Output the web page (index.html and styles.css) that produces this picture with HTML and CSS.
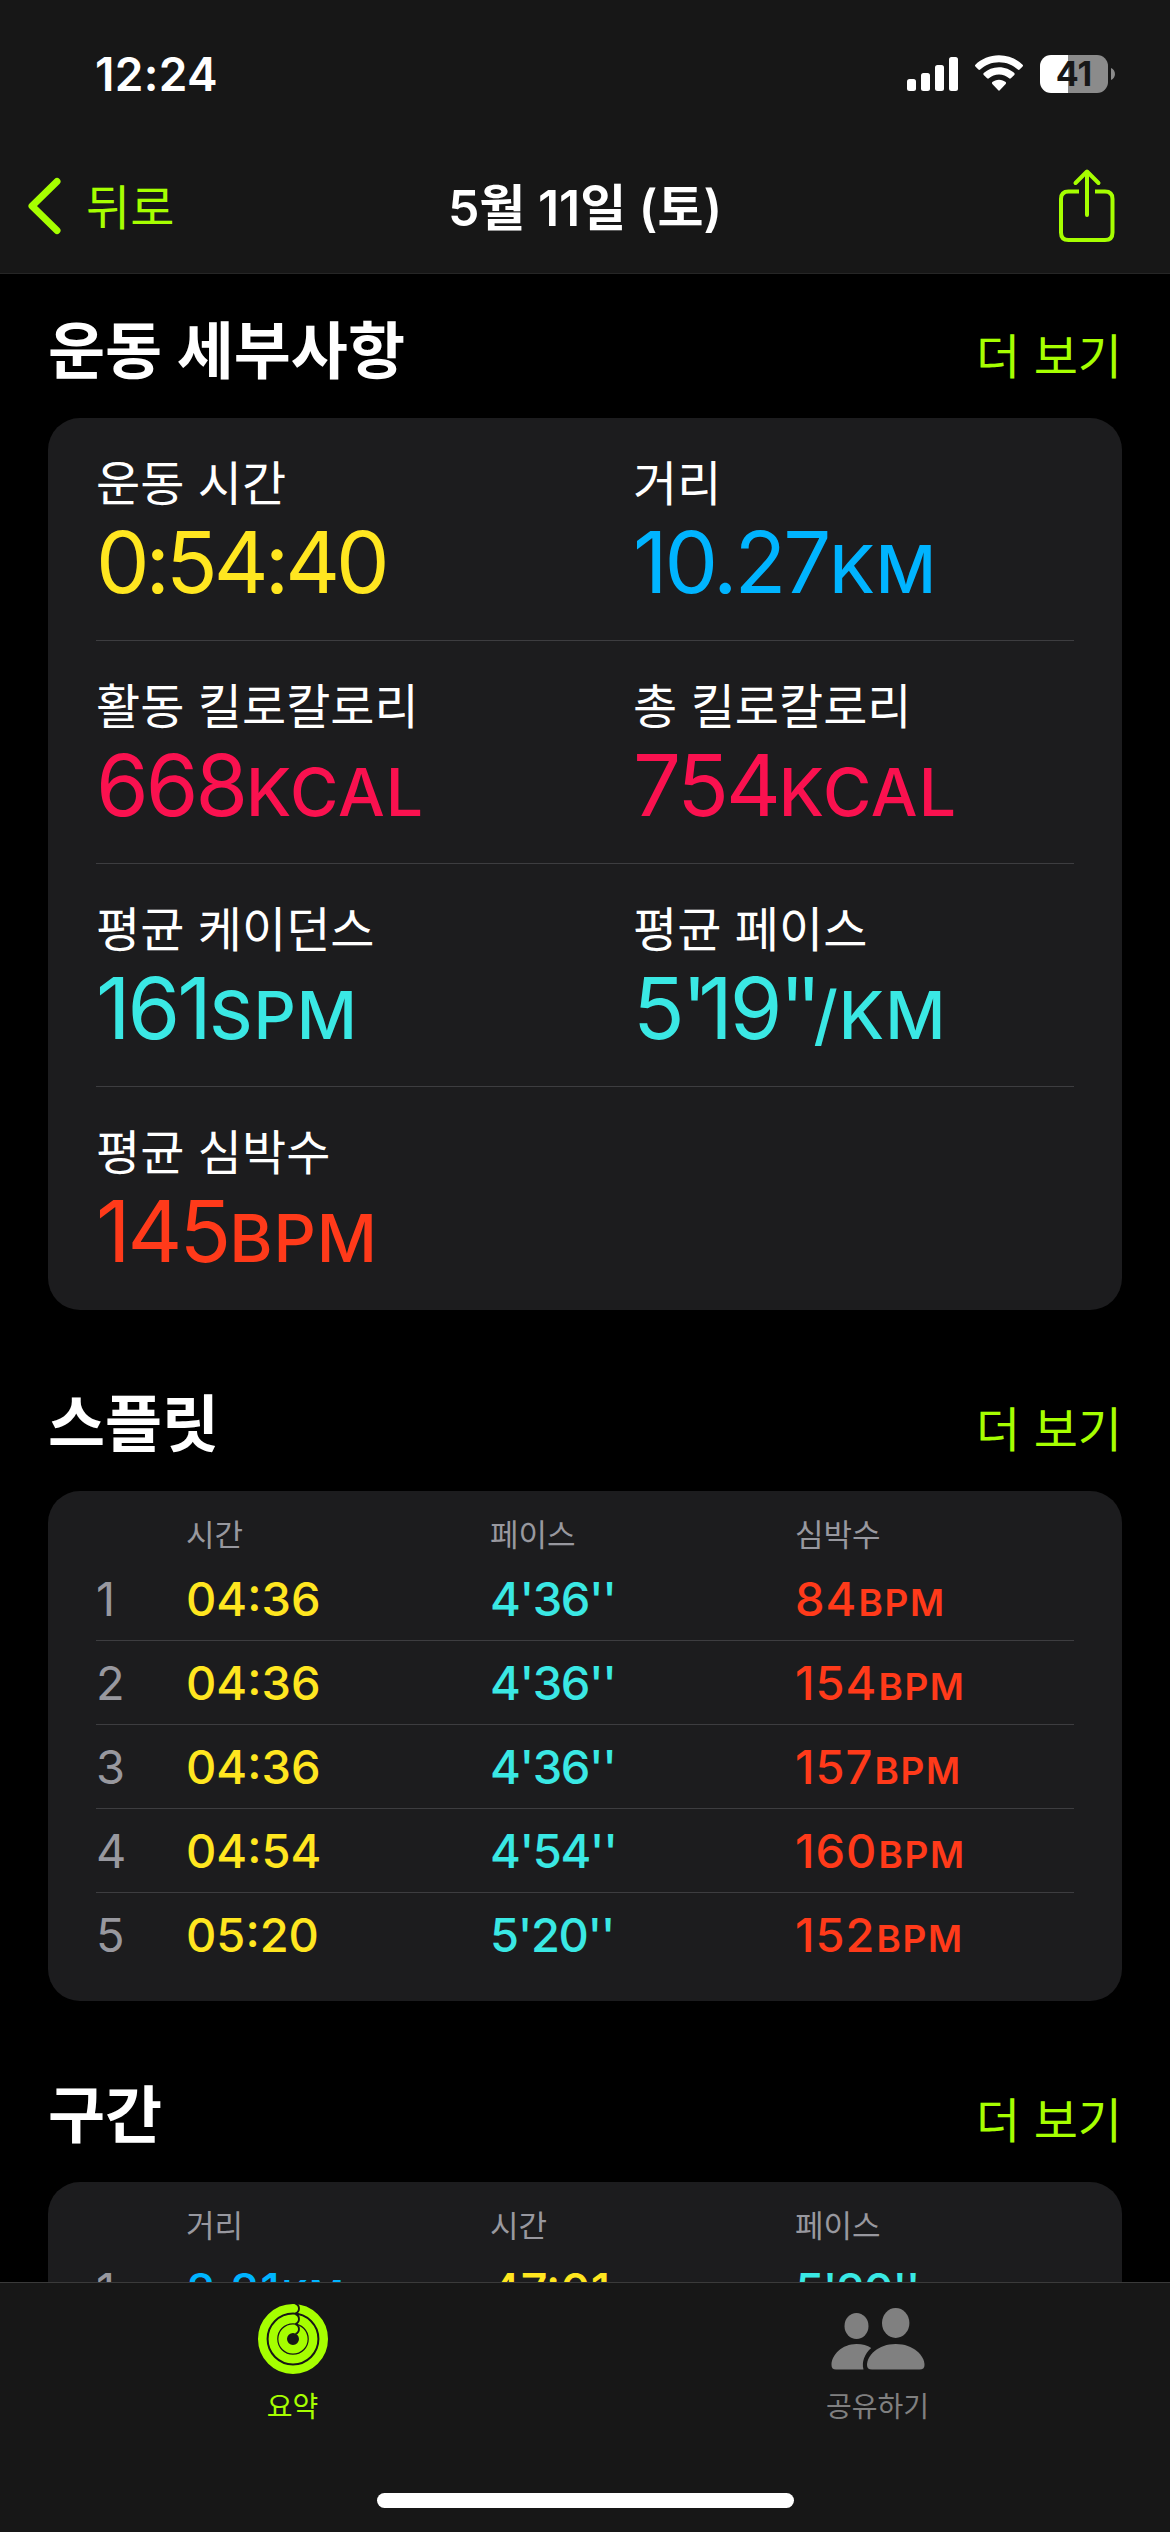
FILE: index.html
```html
<!DOCTYPE html>
<html lang="ko">
<head>
  <meta charset="UTF-8">
  <title>운동 세부사항</title>
  <link rel="stylesheet" href="styles.css">
</head>
<body>
  <div class="phone">
    <header class="header">
      <div class="status-bar">
        <span class="clock">12:24</span>
        <div class="status-icons">
          <svg class="signal" width="51" height="38" viewBox="0 0 51 38" fill="#fff">
            <rect x="0" y="24" width="9" height="12" rx="2.5" />
            <rect x="14" y="18" width="9" height="18" rx="2.5" />
            <rect x="28" y="10" width="9" height="26" rx="2.5" />
            <rect x="42" y="2" width="9" height="34" rx="2.5" />
          </svg>
          <svg class="wifi" width="50" height="38" viewBox="0 0 50 38" fill="#fff">
            <path d="M25 0.3C34.300 0.3 42.600 4 48.600 9.700Q49.500 10.600 48.600 11.500L45.600 14.500Q44.700 15.400 43.800 14.500C38.900 10 32.400 7.200 25 7.200C17.600 7.200 11.100 10 6.200 14.500Q5.300 15.400 4.400 14.500L1.400 11.500Q0.500 10.600 1.400 9.700C7.400 4 15.700 0.3 25 0.3Z" />
            <path d="M25 12.200C31 12.200 36.300 14.500 40.300 18.100Q41.200 19 40.300 19.900L36.900 23.200Q36 24.100 35.100 23.300C32.400 20.900 28.900 19.400 25 19.400C21.100 19.400 17.600 20.900 14.900 23.300Q14 24.100 13.100 23.200L9.700 19.900Q8.800 19 9.700 18.100C13.700 14.500 19 12.200 25 12.200Z" />
            <path d="M25 24.700C27.700 24.700 30 25.600 31.700 27.100Q32.500 28 31.700 28.900L26 35.100Q25 36.200 24 35.100L18.300 28.900Q17.500 28 18.300 27.100C20 25.600 22.300 24.700 25 24.700Z" />
          </svg>
          <div class="battery">
            <span class="battery-body">41</span>
            <svg width="4" height="12" viewBox="0 0 4 12"><path d="M0 0C5.300 2 5.300 10 0 12Z" fill="#8b8b8b" /></svg>
          </div>
        </div>
      </div>
      <nav class="nav-bar">
        <a class="back">
          <svg width="36" height="60" viewBox="0 0 36 60" fill="none" stroke="#a6ff00" stroke-width="7" stroke-linecap="round" stroke-linejoin="round"><path d="M31 5.500L6 30L31 54.500" /></svg>
          <span>뒤로</span>
        </a>
        <h1 class="nav-title">5월 11일 (토)</h1>
        <svg class="share" width="58" height="74" viewBox="0 0 58 74" fill="none" stroke="#a6ff00" stroke-width="4" stroke-linecap="round" stroke-linejoin="round">
          <path stroke-linecap="butt" d="M21 23.500H10.500Q3 23.500 3 31V64.500Q3 72 10.500 72H47Q54.500 72 54.500 64.500V31Q54.500 23.500 47 23.500H37" />
          <path d="M29 47V4M17.500 15L29 3.500L40.500 15" />
        </svg>
      </nav>
    </header>

    <main class="content">
      <section>
        <div class="section-head">
          <h2>운동 세부사항</h2>
          <a class="more">더 보기</a>
        </div>
        <div class="card details">
          <div class="detail-row">
            <div class="detail"><span class="label">운동 시간</span><span class="value yellow time">0:54:40</span></div>
            <div class="detail"><span class="label">거리</span><span class="value blue">10.27<small>KM</small></span></div>
          </div>
          <div class="detail-row">
            <div class="detail"><span class="label">활동 킬로칼로리</span><span class="value pink">668<small>KCAL</small></span></div>
            <div class="detail"><span class="label">총 킬로칼로리</span><span class="value pink">754<small>KCAL</small></span></div>
          </div>
          <div class="detail-row">
            <div class="detail"><span class="label">평균 케이던스</span><span class="value cyan">161<small>SPM</small></span></div>
            <div class="detail"><span class="label">평균 페이스</span><span class="value cyan">5<span class="prime">'</span>19<span class="prime">''</span><small>/KM</small></span></div>
          </div>
          <div class="detail-row">
            <div class="detail"><span class="label">평균 심박수</span><span class="value red">145<small>BPM</small></span></div>
          </div>
        </div>
      </section>

      <section>
        <div class="section-head">
          <h2>스플릿</h2>
          <a class="more">더 보기</a>
        </div>
        <div class="card table">
          <div class="table-head"><span></span><span>시간</span><span>페이스</span><span>심박수</span></div>
          <div class="table-row"><span class="index">1</span><span class="yellow">04:36</span><span class="cyan pace">4'36''</span><span class="red rate">84<small>BPM</small></span></div>
          <div class="table-row"><span class="index">2</span><span class="yellow">04:36</span><span class="cyan pace">4'36''</span><span class="red rate">154<small>BPM</small></span></div>
          <div class="table-row"><span class="index">3</span><span class="yellow">04:36</span><span class="cyan pace">4'36''</span><span class="red rate">157<small>BPM</small></span></div>
          <div class="table-row"><span class="index">4</span><span class="yellow">04:54</span><span class="cyan pace">4'54''</span><span class="red rate">160<small>BPM</small></span></div>
          <div class="table-row"><span class="index">5</span><span class="yellow">05:20</span><span class="cyan pace">5'20''</span><span class="red rate">152<small>BPM</small></span></div>
        </div>
      </section>

      <section>
        <div class="section-head">
          <h2>구간</h2>
          <a class="more">더 보기</a>
        </div>
        <div class="card table">
          <div class="table-head"><span></span><span>거리</span><span>시간</span><span>페이스</span></div>
          <div class="table-row"><span class="index">1</span><span class="blue rate">8.81<small>KM</small></span><span class="yellow">47:01</span><span class="cyan pace">5'20''</span></div>
        </div>
      </section>
    </main>

    <footer class="tab-bar">
      <div class="tabs">
        <a class="tab active">
          <svg width="72" height="72" viewBox="0 0 72 72" fill="none">
            <g stroke="#a6ff00" stroke-width="8.600">
              <circle cx="36" cy="36" r="30.700" />
              <circle cx="36" cy="36" r="20.100" />
              <circle cx="36" cy="36" r="10.300" />
            </g>
            <!-- rounded end of each ring -->
            <g stroke="#171717" stroke-width="1.900">
              <path d="M38.500 0.500A5.200 5.200 0 0 1 38.500 10.300" />
              <path d="M38.500 11A5.200 5.200 0 0 1 38.500 20.800" />
              <path d="M38.500 21.100A5.200 5.200 0 0 1 38.500 30.900" />
            </g>
          </svg>
          <span>요약</span>
        </a>
        <a class="tab">
          <svg width="94" height="72" viewBox="0 0 94 72" fill="#808080">
            <ellipse cx="25.500" cy="23" rx="12" ry="13" />
            <ellipse cx="64.700" cy="20" rx="13.700" ry="15" />
            <path d="M5 66.500Q0.500 66.500 0.500 62C0.500 52 11 41 25.500 41C31.500 41 36.500 42.500 40.200 45C33.500 51 30.500 59 32.500 66.500Z" />
            <path d="M41 66.500Q36 66.500 36 62C36 52.500 47 41 64.700 41C82.500 41 93.500 52.500 93.500 62Q93.500 66.500 88.500 66.500Z" />
          </svg>
          <span>공유하기</span>
        </a>
      </div>
      <div class="home-indicator"></div>
    </footer>
  </div>
</body>
</html>
```
FILE: styles.css
```css
* {
  box-sizing: border-box;
}

body {
  margin: 0;
  background-color: #000;
  color: #fff;
  font-family: Inter, 'Noto Sans CJK KR', sans-serif;
}

h1, h2 {
  margin: 0;
}

.phone {
  display: flex;
  flex-direction: column;
  width: 1170px;
  height: 2532px;
  overflow: hidden;
}

/* header */
.header {
  flex: none;
  height: 274px;
  background-color: #171717;
  border-bottom: 1px solid #262626;
}

.status-bar {
  display: flex;
  justify-content: space-between;
  align-items: center;
  height: 148px;
  padding: 0 55px 0 95px;
}

.clock {
  font-size: 46px;
  font-weight: 600;
  letter-spacing: 0.3px;
}

.status-icons {
  display: flex;
  align-items: center;
  gap: 16px;
}

.battery {
  display: flex;
  align-items: center;
  gap: 3px;
}

.battery-body {
  width: 68px;
  height: 38px;
  border-radius: 11px;
  background: linear-gradient(to right, #fff 28px, #8b8b8b 28px);
  color: #171717;
  font-size: 34px;
  font-weight: 700;
  line-height: 38px;
  text-align: center;
}

.nav-bar {
  display: grid;
  grid-template-columns: 1fr auto 1fr;
  align-items: center;
  height: 116px;
  padding: 0 26px;
}

.back {
  display: flex;
  align-items: center;
  gap: 24px;
  color: #a6ff00;
  font-size: 48px;
}

.back span, .nav-title {
  padding-bottom: 5px;
}

.nav-title {
  font-size: 50px;
  font-weight: 600;
}

.share {
  justify-self: end;
  margin: 0 28px 3px 0;
}

/* sections */
.content {
  flex: 1;
  min-height: 0;
  overflow: hidden;
  padding: 0 48px;
}

section {
  margin-bottom: 37px;
}

.section-head {
  display: flex;
  justify-content: space-between;
  height: 144px;
  line-height: 156px;
}

.section-head h2 {
  font-size: 62px;
  font-weight: 700;
}

.more {
  color: #a6ff00;
  font-size: 48px;
  line-height: 165px;
}

.card {
  padding: 0 48px;
  background-color: #1c1c1e;
  border-radius: 32px;
}

.detail-row {
  display: grid;
  grid-template-columns: 537px 1fr;
  height: 223px;
  padding-top: 36px;
  border-bottom: 1px solid #3d3d40;
}

.detail-row:last-child {
  border-bottom: none;
}

.detail {
  display: flex;
  flex-direction: column;
}

.label {
  font-size: 48px;
  line-height: 60px;
}

.value {
  font-size: 85px;
  letter-spacing: -3px;
  line-height: 98px;
}

.value small {
  margin-left: 1px;
  font-size: 66px;
  font-weight: 500;
  letter-spacing: 1px;
}

.value.time {
  letter-spacing: -4px;
}

.prime {
  letter-spacing: -9px;
}

/* split tables */
.table {
  padding-bottom: 25px;
}

.table-head, .table-row {
  display: grid;
  grid-template-columns: 90px 304px 305px 1fr;
}

.table-head {
  height: 66px;
  color: #98989f;
  font-size: 31px;
  line-height: 88px;
}

.table-row {
  height: 84px;
  border-bottom: 1px solid #3d3d40;
  font-size: 47px;
  font-weight: 500;
  line-height: 84px;
}

.table-row:last-child {
  height: 83px;
  border-bottom: none;
}

.table-row small {
  margin-left: 1px;
  font-size: 37px;
  font-weight: 600;
  letter-spacing: 1.6px;
}

.table-row .pace {
  letter-spacing: -1.4px;
}

.table-row .rate {
  letter-spacing: 1px;
}

.index {
  color: #98989f;
  font-weight: 400;
}

.yellow { color: #ffe620; }
.blue { color: #00b4ff; }
.pink { color: #fa114f; }
.cyan { color: #3ae8e4; }
.red { color: #ff3a1a; }

/* tab bar */
.tab-bar {
  display: flex;
  flex: none;
  flex-direction: column;
  justify-content: space-between;
  align-items: center;
  height: 250px;
  padding-bottom: 24px;
  background-color: #171717;
  border-top: 1px solid #3a3a3a;
}

.tabs {
  display: flex;
  width: 100%;
}

.tab {
  display: flex;
  flex: 1;
  flex-direction: column;
  align-items: center;
  padding-top: 20px;
  color: #808080;
  font-size: 28px;
  line-height: 64px;
}

.tab.active {
  color: #a6ff00;
}

.home-indicator {
  width: 417px;
  height: 15px;
  border-radius: 8px;
  background-color: #fff;
}
```
